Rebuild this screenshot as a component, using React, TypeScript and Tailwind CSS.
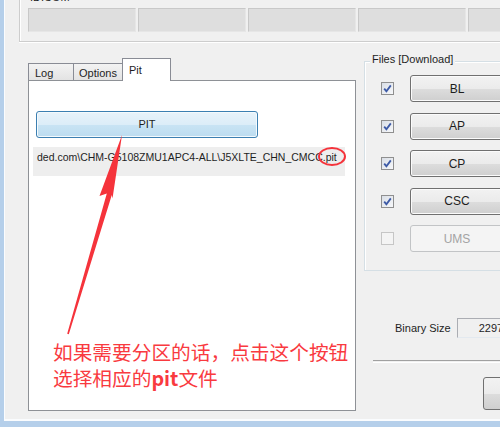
import React from "react";

const FILE_ROWS = [
  { name: "BL", checked: true },
  { name: "AP", checked: true },
  { name: "CP", checked: true },
  { name: "CSC", checked: true },
  { name: "UMS", checked: false },
];

function CheckBox({ checked }: { checked: boolean }) {
  if (!checked) {
    return <div className="h-[13px] w-[13px] shrink-0 border border-[#c6c6c6] bg-[#f4f4f4]" />;
  }
  return (
    <div className="flex h-[13px] w-[13px] shrink-0 items-center justify-center border border-[#8f8f8f] bg-[linear-gradient(135deg,#d9dee6,#f7f8fa)]">
      <svg width="9" height="9" viewBox="0 0 9 9">
        <path d="M1.2 4.6 L3.4 7.2 L7.8 1.4" fill="none" stroke="#3d5aa6" strokeWidth="1.8" />
      </svg>
    </div>
  );
}

export default function App() {
  return (
    <div className="relative h-[427px] w-[500px] overflow-hidden bg-[#f0f0f0] font-['Liberation_Sans',Arial,sans-serif] text-[11px] text-[#1e1e1e]">
      <div className="flex h-full flex-col border-b-[6px] border-l-[4px] border-[#b5cfea]">
        <div className="flex flex-1 flex-col border-b-2 border-l border-[#fafcfe]">
          {/* top group */}
          <div className="ml-[14px] h-[42px] border-b border-l border-[#cdcdcd] pl-[8px] shadow-[0_1px_0_#ffffff,inset_1px_0_0_#ffffff]">
            <div className="-mt-[9px] ml-[2px] h-[13px] leading-[13px]">ID:COM</div>
            <div className="mt-[4px] flex gap-[2px]">
              {[0, 1, 2, 3, 4].map((i) => (
                <div
                  key={i}
                  className="h-[24px] w-[108px] shrink-0 border border-[#c8c8c8] border-b-[#e6e6e6] border-r-[#e6e6e6] bg-[#dedede]"
                />
              ))}
            </div>
          </div>

          <div className="flex flex-1">
            {/* tab control */}
            <div className="ml-[23px] mt-[17px] flex w-[328px] shrink-0 flex-col">
              <div className="flex h-[21px] items-end">
                <div className="h-[17px] w-[46px] border border-b-0 border-[#898c95] bg-[linear-gradient(#f3f3f3,#e3e3e3)] pl-[6px] pt-[3px] leading-[13px]">
                  Log
                </div>
                <div className="-ml-[1px] h-[17px] w-[50px] border border-b-0 border-[#898c95] bg-[linear-gradient(#f3f3f3,#e3e3e3)] pl-[5px] pt-[3px] leading-[13px]">
                  Options
                </div>
                <div className="relative z-10 -mb-[1px] -ml-[1px] h-[23px] w-[49px] border border-b-0 border-[#898c95] bg-white pl-[6px] pt-[5px] leading-[13px]">
                  Pit
                </div>
              </div>
              <div className="flex h-[331px] flex-col border border-[#8e9196] bg-white">
                <button className="ml-[7px] mt-[30px] h-[27px] w-[222px] rounded-[3px] border border-[#3c7fb1] bg-[linear-gradient(#e8f3fa_0%,#dcedf8_50%,#c9e4f4_50%,#bcdcf0_100%)] text-[11px] text-[#1e1e1e] shadow-[inset_0_0_0_1px_#f4fafd]">
                  PIT
                </button>
                <div className="ml-[4px] mt-[9px] h-[29px] w-[312px] whitespace-nowrap bg-[#eeeeee] pl-[4px] pt-[4px] text-[10.5px] leading-[13px]">
                  ded.com\CHM-G5108ZMU1APC4-ALL\J5XLTE_CHN_CMCC.pit
                </div>
                <div className="ml-[24px] mt-[163px] font-['Noto_Sans_CJK_SC',sans-serif] text-[19.7px] leading-[26px] text-[#f93a3f]">
                  <div>如果需要分区的话，点击这个按钮</div>
                  <div>
                    选择相应的<span className="font-bold">pit</span>文件
                  </div>
                </div>
              </div>
            </div>

            {/* right column */}
            <div className="ml-[8px] flex flex-1 flex-col">
              <div className="mt-[19px] flex h-[210px] flex-col border border-r-0 border-[#d5dfe5] shadow-[inset_1px_1px_0_#ffffff]">
                <div className="-mt-[9px] ml-[5px] h-[13px] w-fit bg-[#f0f0f0] px-[2px] leading-[13px]">
                  Files [Download]
                </div>
                <div className="mt-[9px] flex flex-col gap-[10.5px]">
                  {FILE_ROWS.map((r) => (
                    <div key={r.name} className="flex h-[27px] items-center">
                      <div className="ml-[16px]">
                        <CheckBox checked={r.checked} />
                      </div>
                      {r.checked ? (
                        <div className="ml-[16px] flex h-[27px] w-[94px] shrink-0 items-center justify-center rounded-[3px] border border-[#707070] bg-[linear-gradient(#f2f2f2_0%,#ebebeb_50%,#dddddd_50%,#cfcfcf_100%)] text-[12px] shadow-[inset_0_0_0_1px_#fbfbfb]">
                          {r.name}
                        </div>
                      ) : (
                        <div className="ml-[16px] flex h-[27px] w-[94px] shrink-0 items-center justify-center rounded-[3px] border border-[#c2c4c6] bg-[#f4f4f4] text-[12px] text-[#a3a3a3]">
                          {r.name}
                        </div>
                      )}
                    </div>
                  ))}
                </div>
              </div>

              <div className="ml-[31px] mt-[47px] flex items-center">
                <span className="leading-[13px]">Binary Size</span>
                <div className="ml-[6px] h-[20px] w-[60px] shrink-0 border border-[#abadb3] border-b-[#e3e9ef] border-r-[#e3e9ef] bg-[#f0f0f0] pl-[21px] pt-[3px] leading-[13px]">
                  2297
                </div>
              </div>

              <div className="ml-[9px] mt-[22px] h-[2px] border-t border-[#a0a0a0] bg-[#f0f0f0] shadow-[0_1px_0_#ffffff]" />

              <div className="ml-[119px] mt-[15px] h-[33px] w-[80px] shrink-0 rounded-[3px] border border-[#707070] bg-[linear-gradient(#f2f2f2_0%,#ebebeb_50%,#dddddd_50%,#cfcfcf_100%)]" />
            </div>
          </div>
        </div>
      </div>

      {/* annotation overlay */}
      <svg className="pointer-events-none absolute left-0 top-0" width="500" height="427" viewBox="0 0 500 427">
        <polygon
          points="122,135 112.5,198.5 111.8,195 68.8,334.2 67.2,333.8 106.8,193.6 99.5,196 122,135"
          fill="#f5333b"
        />
        <ellipse cx="332" cy="156.5" rx="13" ry="8.5" fill="none" stroke="#f5333b" strokeWidth="2" />
      </svg>
    </div>
  );
}
